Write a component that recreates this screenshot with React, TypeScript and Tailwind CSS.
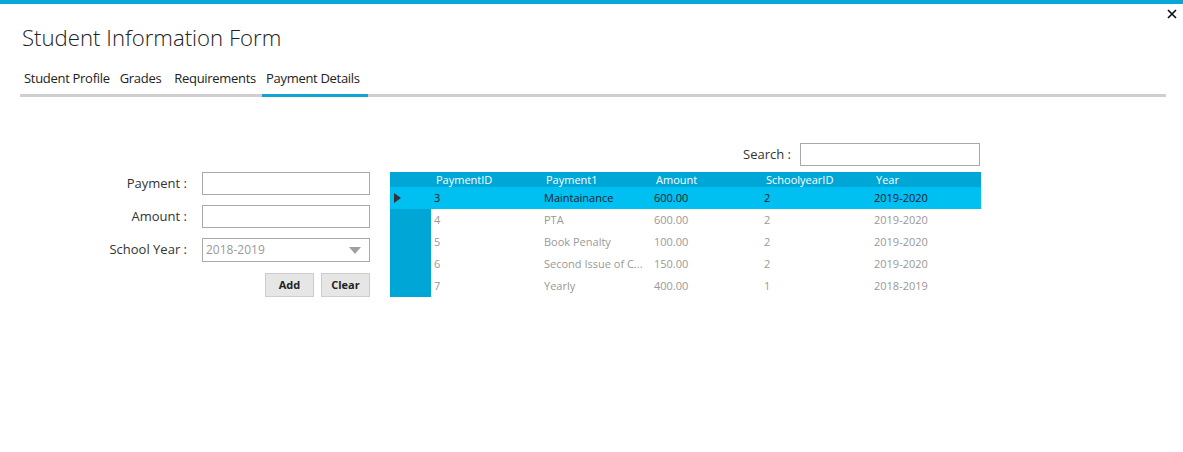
import React from "react";

const rows = [
  { id: "3", p: "Maintainance", a: "600.00", s: "2", y: "2019-2020", sel: true },
  { id: "4", p: "PTA", a: "600.00", s: "2", y: "2019-2020" },
  { id: "5", p: "Book Penalty", a: "100.00", s: "2", y: "2019-2020" },
  { id: "6", p: "Second Issue of C...", a: "150.00", s: "2", y: "2019-2020" },
  { id: "7", p: "Yearly", a: "400.00", s: "1", y: "2018-2019" },
];

export default function App() {
  return (
    <div
      className="relative w-[1183px] h-[452px] bg-white overflow-hidden text-[#333]"
      style={{ fontFamily: '"Open Sans", "Noto Sans", sans-serif' }}
    >
      <div className="h-[4px] bg-[#07a7d8]" />
      <svg className="absolute left-[1167px] top-[9px]" width="10" height="10" viewBox="0 0 10 10">
        <path d="M1 1 L9 9 M9 1 L1 9" stroke="#111" strokeWidth="1.7" />
      </svg>
      <div className="pl-[22px] pt-[18px] text-[22.2px] leading-[32px] text-[#222] font-light">
        Student Information Form
      </div>
      <div className="ml-[20px] mt-[15px] w-[1146px] flex border-b-[3px] border-[#cfcfcf] text-[13px] leading-[18px] text-[#222] tracking-[-0.3px]">
        <div className="pl-[4px] pr-[5px] pb-[7px]">Student Profile</div>
        <div className="pl-[5px] pr-[7px] pb-[7px]">Grades</div>
        <div className="px-[6px] pb-[7px]">Requirements</div>
        <div className="pl-[4px] pr-[8px] pb-[7px] -mb-[3px] border-b-[3px] border-[#11a3d3]">Payment Details</div>
      </div>
      <div className="flex mt-[46px] ml-[100px]">
        <div className="w-[270px] pt-[29px] flex flex-col text-[13px] text-[#333]">
          <div className="flex items-center h-[23px]">
            <div className="w-[88px] text-right pr-[1px]">Payment :</div>
            <div className="ml-[14px] w-[168px] h-[23px] border border-[#a8a8a8]" />
          </div>
          <div className="flex items-center h-[23px] mt-[10px]">
            <div className="w-[88px] text-right pr-[1px]">Amount :</div>
            <div className="ml-[14px] w-[168px] h-[23px] border border-[#a8a8a8]" />
          </div>
          <div className="flex items-center h-[24px] mt-[10px]">
            <div className="w-[88px] text-right pr-[1px] whitespace-nowrap">School Year :</div>
            <div className="ml-[14px] w-[168px] h-[24px] border border-[#a8a8a8] flex items-center justify-between pl-[3px] pr-[8px] text-[12px] text-[#9a9a9a]">
              <span>2018-2019</span>
              <svg width="12" height="7" viewBox="0 0 12 7"><path d="M0 0 L12 0 L6 7 Z" fill="#a0a0a0" /></svg>
            </div>
          </div>
          <div className="flex justify-end gap-[7px] mt-[11px] text-[11px] font-bold text-[#222]">
            <div className="w-[49px] h-[24px] bg-[#e6e6e6] border border-[#cccccc] flex items-center justify-center">Add</div>
            <div className="w-[49px] h-[24px] bg-[#e6e6e6] border border-[#cccccc] flex items-center justify-center">Clear</div>
          </div>
        </div>
        <div className="ml-[20px] w-[591px] flex flex-col">
          <div className="flex justify-end items-center h-[23px] pr-[1px]">
            <span className="text-[13px] text-[#333] mr-[9px]">Search :</span>
            <div className="w-[180px] h-[23px] border border-[#a8a8a8]" />
          </div>
          <div className="mt-[6px] flex text-[11px]">
            <div className="w-[42px] bg-[#00a6d6] flex flex-col">
              <div className="h-[15px]" />
              <div className="h-[22px] bg-[#00bff1] flex items-center pl-[4px]">
                <svg width="7" height="10" viewBox="0 0 7 10"><path d="M0 0 L7 5 L0 10 Z" fill="#333" /></svg>
              </div>
              <div className="h-[88px]" />
            </div>
            <div className="flex-1 flex flex-col">
              <div className="h-[15px] bg-[#00a6d6] flex text-white leading-[15px]">
                {["PaymentID", "Payment1", "Amount", "SchoolyearID", "Year"].map((h) => (
                  <div key={h} className="w-[110px] pl-[5px]">{h}</div>
                ))}
              </div>
              {rows.map((r) => (
                <div
                  key={r.id}
                  className={`h-[22px] flex items-center ${r.sel ? "bg-[#00bff1] text-[#1c1c2c]" : "text-[#999]"}`}
                >
                  {[r.id, r.p, r.a, r.s, r.y].map((c, i) => (
                    <div key={i} className="w-[110px] pl-[3px] whitespace-nowrap">{c}</div>
                  ))}
                </div>
              ))}
            </div>
          </div>
        </div>
      </div>
    </div>
  );
}
